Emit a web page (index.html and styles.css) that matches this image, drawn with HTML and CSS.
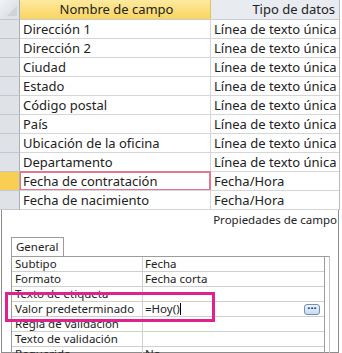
FILE: index.html
```html
<!DOCTYPE html>
<html lang="es">
<head>
  <meta charset="UTF-8">
  <title>Vista Diseño</title>
  <link rel="stylesheet" href="styles.css">
</head>
<body>
  <div class="design">
    <div class="fields">
      <div class="row head">
        <div class="sel corner"></div>
        <div class="cell name">Nombre de campo</div>
        <div class="cell type">Tipo de datos</div>
      </div>
      <div class="row"><div class="sel"></div><div class="cell">Dirección 1</div><div class="cell">Línea de texto única</div></div>
      <div class="row"><div class="sel"></div><div class="cell">Dirección 2</div><div class="cell">Línea de texto única</div></div>
      <div class="row"><div class="sel"></div><div class="cell">Ciudad</div><div class="cell">Línea de texto única</div></div>
      <div class="row"><div class="sel"></div><div class="cell">Estado</div><div class="cell">Línea de texto única</div></div>
      <div class="row"><div class="sel"></div><div class="cell">Código postal</div><div class="cell">Línea de texto única</div></div>
      <div class="row"><div class="sel"></div><div class="cell">País</div><div class="cell">Línea de texto única</div></div>
      <div class="row"><div class="sel"></div><div class="cell">Ubicación de la oficina</div><div class="cell">Línea de texto única</div></div>
      <div class="row"><div class="sel"></div><div class="cell">Departamento</div><div class="cell">Línea de texto única</div></div>
      <div class="row current"><div class="sel"></div><div class="cell">Fecha de contratación</div><div class="cell">Fecha/Hora</div></div>
      <div class="row"><div class="sel"></div><div class="cell">Fecha de nacimiento</div><div class="cell">Fecha/Hora</div></div>
    </div>

    <div class="props">
      <div class="props-title">Propiedades de campo</div>
      <div class="tabs">
        <div class="tab">General</div>
      </div>
      <div class="page">
        <div class="grid">
          <div class="prow"><div class="plabel">Subtipo</div><div class="pval">Fecha</div></div>
          <div class="prow"><div class="plabel">Formato</div><div class="pval">Fecha corta</div></div>
          <div class="prow"><div class="plabel">Texto de etiqueta</div><div class="pval"></div></div>
          <div class="prow"><div class="plabel">Valor predeterminado</div><div class="pval">=Hoy()<span class="caret"></span><span class="build">&middot;&middot;&middot;</span></div></div>
          <div class="prow"><div class="plabel">Regla de validación</div><div class="pval"></div></div>
          <div class="prow"><div class="plabel">Texto de validación</div><div class="pval"></div></div>
          <div class="prow"><div class="plabel">Requerido</div><div class="pval">No</div></div>
        </div>
      </div>
      <div class="callout"></div>
    </div>
  </div>
</body>
</html>
```

FILE: styles.css
```css
body {
  margin: 0;
  width: 342px;
  height: 353px;
  overflow: hidden;
  background-color: #fff;
  font-family: "Noto Sans", sans-serif;
  color: #222;
}
.design {
  position: relative;
  width: 342px;
  height: 353px;
}
.fields {
  width: 339px;
  border-right: 1px solid #b8bcc2;
}
.row {
  display: grid;
  grid-template-columns: 20px 191px 1fr;
  height: 18px;
  border-bottom: 1px solid #d4d6da;
  font-size: 13px;
  line-height: 18px;
}
.row.head {
  height: 19px;
  line-height: 19px;
  border-bottom: 1px solid #c9ccd1;
}
.sel {
  background-color: #dfe3e8;
  border-right: 1px solid #a9afb7;
  border-bottom: 1px solid #c3c8ce;
  margin-bottom: -1px;
}
.corner {
  background: linear-gradient(135deg, #f2f4f6 0%, #dfe3e8 60%);
  position: relative;
}
.corner::after {
  content: "";
  position: absolute;
  right: 2px;
  bottom: 3px;
  border-left: 10px solid transparent;
  border-bottom: 10px solid #cfd4da;
}
.cell {
  padding-left: 3px;
  white-space: nowrap;
  overflow: hidden;
  border-right: 1px solid #d4d6da;
}
.cell:last-child {
  border-right: none;
}
.head .name {
  background: linear-gradient(#fdeaa0, #f8d55f);
  text-align: center;
  border-right: 1px solid #e4c35a;
}
.head .type {
  background-color: #e8ebef;
  text-align: right;
  padding-right: 4px;
}
.current .sel {
  background-color: #f8cf52;
}
.current .cell:nth-child(2) {
  box-shadow: inset 0 0 0 1px #e27790;
  border-top: 1px solid #e27790;
  margin-top: -1px;
  border-right: 1px solid #e27790;
}

.props {
  position: relative;
  height: 142px;
  margin-left: 1px;
  width: 336px;
  border-left: 1px solid #8c8c8c;
  border-right: 1px solid #8c8c8c;
  border-bottom: 1px solid #8c8c8c;
}
.props-title {
  font-size: 11.5px;
  text-align: right;
  padding: 2px 1px 0 0;
  height: 18px;
}
.tabs {
  display: flex;
  padding-left: 9px;
  margin-top: 7px;
}
.tab {
  font-size: 11.5px;
  height: 18px;
  line-height: 18px;
  padding: 0 5px 0 4px;
  border: 1px solid #9c9c9c;
  border-bottom: none;
  background-color: #fff;
}
.page {
  margin-left: 9px;
  width: 318px;
  border-top: 1px solid #9c9c9c;
  border-right: 1px solid #c4c4c4;
}
.grid {
  width: 312px;
  border-left: 1px solid #9c9c9c;
  border-right: 1px solid #9c9c9c;
}
.prow {
  display: grid;
  grid-template-columns: 131px 1fr;
  height: 14px;
  border-bottom: 1px solid #cfcfcf;
  font-size: 11.5px;
  line-height: 14px;
}
.plabel {
  padding-left: 3px;
  border-right: 1px solid #cfcfcf;
  white-space: nowrap;
}
.pval {
  padding-left: 2px;
  display: flex;
  align-items: center;
  white-space: nowrap;
}
.caret {
  width: 1px;
  height: 12px;
  background-color: #000;
}
.build {
  margin-left: auto;
  margin-right: 4px;
  width: 14px;
  height: 9px;
  line-height: 5px;
  font-size: 11px;
  font-weight: bold;
  text-align: center;
  color: #1d2f4f;
  border: 1px solid #6f8eb4;
  border-radius: 3px;
  background: linear-gradient(#eaf3fc, #c8dcf2);
}
.callout {
  position: absolute;
  left: 3px;
  top: 82px;
  width: 204px;
  height: 24px;
  border: 3px solid #e0228e;
}
```
